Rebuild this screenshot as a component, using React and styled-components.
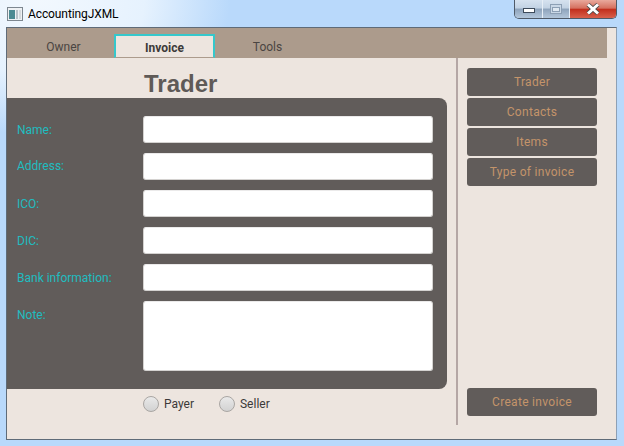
import React from 'react';
import styled, { createGlobalStyle } from 'styled-components';

const GlobalStyle = createGlobalStyle`
  html, body {
    margin: 0;
    padding: 0;
    background: #b9d9fb;
  }
  * {
    box-sizing: border-box;
  }
`;

const Win = styled.div`
  width: 624px;
  height: 446px;
  display: flex;
  flex-direction: column;
  padding: 0 6px 6px 6px;
  background: radial-gradient(ellipse 190px 135px at 40px 0, #f2f8fe 0, #e6f2fe 55%, #b9d9fb 100%), #b9d9fb;
  font-family: Roboto, 'Noto Sans', sans-serif;
`;

const TitleBar = styled.div`
  height: 27px;
  display: flex;
  align-items: flex-start;
  flex-shrink: 0;
`;

const AppIcon = styled.svg`
  width: 16px;
  height: 16px;
  margin: 6px 6px 0 1px;
`;

const Title = styled.div`
  margin-top: 6px;
  margin-left: -1px;
  font-size: 12px;
  letter-spacing: -0.1px;
  line-height: 16px;
  color: #000;
`;

const Controls = styled.div`
  margin-left: auto;
  margin-right: 1px;
  height: 19px;
  display: flex;
  border: 1px solid #4f5a68;
  border-top: none;
  border-radius: 0 0 5px 5px;
  overflow: hidden;
`;

const Control = styled.div`
  width: ${(p) => p.$w}px;
  display: flex;
  align-items: center;
  justify-content: center;
  background: linear-gradient(#d6e2ef 0, #c2d2e3 45%, #8ea3bb 50%, #b3c6da 100%);
  border-right: 1px solid #e6eef6;
`;

const CloseControl = styled(Control)`
  background: linear-gradient(#e9a99c 0, #d5705f 45%, #c22f1d 52%, #d9604c 100%);
  border-right: none;
`;

const MinGlyph = styled.div`
  width: 12px;
  height: 5px;
  margin-top: 3px;
  background: #fff;
  border: 1px solid #3d4a5a;
`;

const MaxGlyph = styled.div`
  width: 12px;
  height: 10px;
  border: 1px solid #8c9fb4;
  background: #c9d7e6;
  display: flex;
  align-items: center;
  justify-content: center;
  &::after {
    content: '';
    width: 6px;
    height: 3px;
    background: #dfe8f1;
    border: 1px solid #8c9fb4;
  }
`;

const Content = styled.div`
  flex: 1;
  width: 611px;
  display: flex;
  flex-direction: column;
  background: #ede5df;
  border: 1px solid #5f6b78;
  border-right-color: #8da0b5;
`;

const TabBar = styled.div`
  width: 600px;
  height: 30px;
  flex-shrink: 0;
  display: flex;
  padding-left: 6px;
  background: #ac9b8c;
`;

const Tab = styled.div`
  width: 101px;
  margin-top: ${(p) => (p.$active ? '6px' : '0')};
  margin-right: ${(p) => (p.$active ? '2px' : '0')};
  padding-top: ${(p) => (p.$active ? '5px' : '12px')};
  text-align: center;
  font-size: 12px;
  line-height: 15px;
  font-weight: ${(p) => (p.$active ? 700 : 400)};
  color: ${(p) => (p.$active ? '#3c3a39' : '#4a4542')};
  background: ${(p) => (p.$active ? '#ede5df' : 'transparent')};
  border: ${(p) => (p.$active ? '2px solid #35c8cc' : 'none')};
  border-bottom: ${(p) => (p.$active ? '1px solid #ac9b8c' : 'none')};
`;

const Body = styled.div`
  flex: 1;
  display: flex;
  min-height: 0;
`;

const FormColumn = styled.div`
  width: 440px;
  display: flex;
  flex-direction: column;
`;

const Heading = styled.h1`
  margin: 0;
  height: 40px;
  padding: 11px 0 0 137px;
  font-family: 'Liberation Sans', Arial, sans-serif;
  font-size: 24px;
  line-height: 30px;
  font-weight: 700;
  color: #5f5a57;
`;

const Panel = styled.div`
  height: 291px;
  padding: 18px 14px 18px 10px;
  display: flex;
  flex-direction: column;
  gap: 10px;
  background: #615c5a;
  border-radius: 0 8px 8px 0;
`;

const Row = styled.label`
  display: flex;
  align-items: flex-start;
`;

const RowLabel = styled.span`
  width: 126px;
  padding-top: ${(p) => p.$top}px;
  font-size: 12px;
  line-height: 16px;
  color: #1fbcc0;
`;

const Field = styled.div`
  width: 290px;
  height: ${(p) => p.$h}px;
  background: #fff;
  border: 1px solid #d4d2d0;
  border-top-color: #ebeaea;
  border-radius: 3px;
`;

const Radios = styled.div`
  display: flex;
  padding: 6px 0 0 136px;
  gap: 25px;
`;

const RadioItem = styled.div`
  display: flex;
  align-items: center;
  gap: 5px;
  font-size: 12px;
  line-height: 18px;
  color: #3c3a39;
`;

const RadioDot = styled.span`
  width: 16px;
  height: 16px;
  border-radius: 50%;
  border: 1px solid #a9a6a3;
  background: linear-gradient(#e9e9e9, #d2d2d2);
`;

const Divider = styled.div`
  width: 2px;
  height: 367px;
  margin-left: 9px;
  background: #b5a7a5;
`;

const Side = styled.div`
  width: 130px;
  height: 348px;
  margin: 10px 0 0 9px;
  display: flex;
  flex-direction: column;
  gap: 2px;
`;

const SideButton = styled.div`
  height: 28px;
  flex-shrink: 0;
  display: flex;
  align-items: center;
  justify-content: center;
  background: #615c5a;
  border-radius: 3px;
  font-size: 12px;
  letter-spacing: 0.3px;
  color: #c4946a;
`;

const CreateButton = styled(SideButton)`
  margin-top: auto;
`;

const fields = [
  { label: 'Name:', h: 27, top: 6 },
  { label: 'Address:', h: 27, top: 5 },
  { label: 'ICO:', h: 27, top: 6 },
  { label: 'DIC:', h: 27, top: 6 },
  { label: 'Bank information:', h: 27, top: 6 },
  { label: 'Note:', h: 70, top: 6 },
];

const sideItems = ['Trader', 'Contacts', 'Items', 'Type of invoice'];

const App = () => {
  return (
    <Win>
      <GlobalStyle />
      <TitleBar>
        <AppIcon viewBox="0 0 16 16">
          <rect x="0.5" y="1.5" width="15" height="13" fill="#eef1f4" stroke="#7d8790" />
          <rect x="2" y="4" width="6" height="9" fill="#4c8a92" />
          <rect x="9" y="4" width="2" height="9" fill="#b9c2c9" />
          <rect x="12" y="4" width="2" height="9" fill="#d5dade" />
        </AppIcon>
        <Title>AccountingJXML</Title>
        <Controls>
          <Control $w={28}>
            <MinGlyph />
          </Control>
          <Control $w={27}>
            <MaxGlyph />
          </Control>
          <CloseControl $w={46}>
            <svg width="16" height="12" viewBox="0 0 16 12">
              <path d="M3 1.5 L13 10.5 M13 1.5 L3 10.5" stroke="#4a4a4a" strokeWidth="4.4" />
              <path d="M3 1.5 L13 10.5 M13 1.5 L3 10.5" stroke="#fff" strokeWidth="3" />
            </svg>
          </CloseControl>
        </Controls>
      </TitleBar>
      <Content>
        <TabBar>
          <Tab>Owner</Tab>
          <Tab $active>Invoice</Tab>
          <Tab>Tools</Tab>
        </TabBar>
        <Body>
          <FormColumn>
            <Heading>Trader</Heading>
            <Panel>
              {fields.map((f) => (
                <Row key={f.label}>
                  <RowLabel $top={f.top}>{f.label}</RowLabel>
                  <Field $h={f.h} />
                </Row>
              ))}
            </Panel>
            <Radios>
              <RadioItem>
                <RadioDot />
                Payer
              </RadioItem>
              <RadioItem>
                <RadioDot />
                Seller
              </RadioItem>
            </Radios>
          </FormColumn>
          <Divider />
          <Side>
            {sideItems.map((item) => (
              <SideButton key={item}>{item}</SideButton>
            ))}
            <CreateButton>Create invoice</CreateButton>
          </Side>
        </Body>
      </Content>
    </Win>
  );
};

export default App;
